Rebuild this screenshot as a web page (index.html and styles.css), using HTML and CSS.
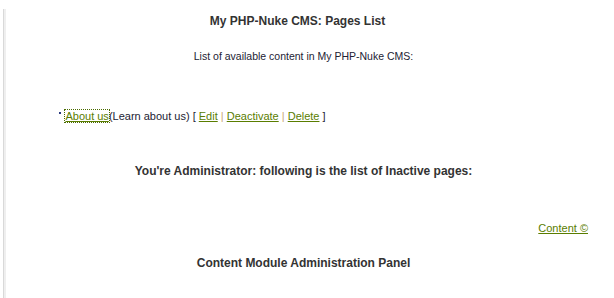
FILE: index.html
```html
<!DOCTYPE html>
<html lang="en">
<head>
    <meta charset="UTF-8">
    <title>My PHP-Nuke CMS: Pages List</title>
    <link rel="stylesheet" href="styles.css">
</head>
<body>
    <div class="frame">
        <div class="intro">
            <h2 class="title">My PHP-Nuke CMS: Pages List</h2>
            <p class="lead">List of available content in My PHP-Nuke CMS:</p>
        </div>

        <!-- Liste des pages actives -->
        <div class="pages">
            <span class="bullet"></span>
            <a href="#" class="focused">About us</a>(Learn about us) [ <a href="#">Edit</a> <span class="sep">|</span> <a href="#">Deactivate</a> <span class="sep">|</span> <a href="#">Delete</a> ]
        </div>

        <p class="admin">You're Administrator: following is the list of Inactive pages:</p>

        <div class="copy"><a href="#">Content &copy;</a></div>

        <p class="admin panel">Content Module Administration Panel</p>
    </div>
</body>
</html>
```

FILE: styles.css
```css
body {
    margin: 0;
    padding: 0;
    background-color: #ffffff;
    font-family: Tahoma, "Liberation Sans", Arial, sans-serif;
    font-size: 11px;
    color: #222233;
}
a {
    color: #5a7d00;
    text-decoration: underline;
}
.frame {
    margin: 9px 0 0 3px;
    min-height: 289px;
    border-left: 1px solid #d9d9d9;
    box-shadow: inset 2px 0 #efefef;
    padding-right: 11px;
}
.intro {
    text-align: center;
}
.title {
    margin: 0;
    padding: 5px 12px 0 0;
    font-size: 12px;
    font-weight: bold;
    color: #333333;
}
.lead {
    margin: 22px 0 0;
    font-size: 10.5px;
}
.pages {
    margin-top: 48px;
    padding-left: 55px;
}
.bullet {
    display: inline-block;
    width: 2px;
    height: 2px;
    margin-right: 2px;
    vertical-align: 6px;
    background-color: #2b3a80;
}
.focused {
    outline: 1px dotted #4a6a00;
    outline-offset: 0;
}
.sep {
    color: #c9a676;
}
.admin {
    margin: 42px 0 0;
    text-align: center;
    font-size: 12px;
    font-weight: bold;
    color: #333333;
}
.copy {
    margin-top: 44px;
    padding-right: 15px;
    text-align: right;
}
.panel {
    margin-top: 22px;
}
```
